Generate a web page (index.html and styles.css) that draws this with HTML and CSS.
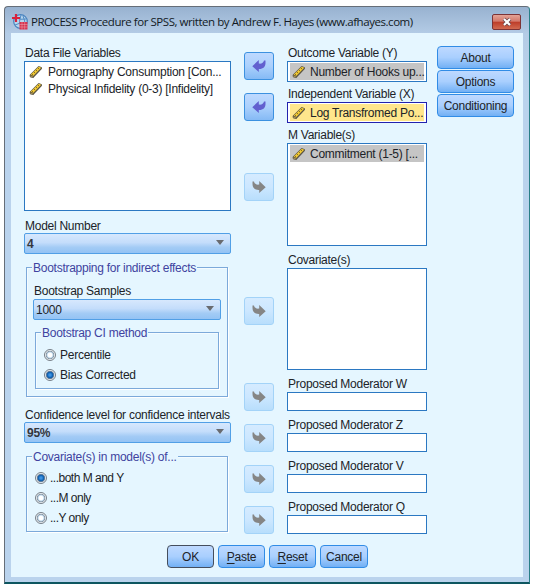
FILE: index.html
```
<!DOCTYPE html>
<html lang="en">
<head>
<meta charset="utf-8">
<title>PROCESS Procedure for SPSS</title>
<link rel="stylesheet" href="styles.css">
</head>
<body>
<svg class="defs" width="0" height="0">
  <symbol id="ruler" viewBox="0 0 14 14">
    <path d="M.8 9.800 9.600 1 12.800 2.200 13 3.800 4.500 12.800 1.200 12Z" fill="#5b5545"/>
    <path d="M1.600 9.800 9.800 1.700 12.200 2.700 4.200 11Z" fill="#f4cb32"/>
    <path d="M3 9.300l1 .5M5 7.300l1 .5M7 5.300l1 .5M9 3.300l1 .5" stroke="#66541c" stroke-width=".8"/>
    <path d="M1 10 4.300 11.300V12.600L1.200 12Z" fill="#b9a05a" stroke="#4a463c" stroke-width=".5"/>
  </symbol>
  <symbol id="back" viewBox="0 0 14 12">
    <path d="M.3 6.200 6.800 0V3.600C9.500 4 11.500 3 12 .6H13.500V3C13.500 7 11 9.200 6.800 9V12Z" fill="#6260cf"/>
  </symbol>
  <symbol id="forward" viewBox="0 0 14 12">
    <path d="M13.700 6.200 7.200 0V3.600C4.500 4 2.500 3 2 .6H.5V3C.5 7 3 9.200 7.200 9V12Z" fill="#858585"/>
  </symbol>
</svg>
<main class="window">
  <header class="titlebar">
    <svg class="logo" viewBox="0 0 16 16">
      <circle cx="8.500" cy="7.500" r="6.800" fill="#b8d5ec" stroke="#4a84bf" stroke-width="1.200"/>
      <path d="M3 11Q8 8 14 9M4 4Q9 6 14 5M9 1Q6 7 9 14M11 2Q14 7 12 12" fill="none" stroke="#4f8ac5" stroke-width="1"/>
      <path d="M4 0V8M0 4H8" stroke="#d9213c" stroke-width="2.200"/>
      <path d="M7.500 8H15.500V15.500H7.500Z" fill="#d53350"/>
      <path d="M7.500 10.500H15.500M7.500 13H15.500M10 8V15.500M12.700 8V15.500" stroke="#f5c4ca" stroke-width=".4"/>
    </svg>
    <span class="title">PROCESS Procedure for SPSS, written by Andrew F. Hayes (www.afhayes.com)</span>
    <span class="close"><svg viewBox="0 0 12 10"><path d="M3 2 9 8M9 2 3 8" stroke="#69444a" stroke-width="3.800"/><path d="M3 2 9 8M9 2 3 8" stroke="#fff" stroke-width="2.200"/></svg></span>
  </header>
  <div class="client">
    <div class="columns">
      <section class="left">
        <label class="label">Data File Variables</label>
        <div class="list source">
          <div class="item"><svg><use href="#ruler"/></svg><span>Pornography Consumption [Con...</span></div>
          <div class="item"><svg><use href="#ruler"/></svg><span>Physical Infidelity (0-3) [Infidelity]</span></div>
        </div>
        <label class="label model-label">Model Number</label>
        <div class="combo bold"><span>4</span><i></i></div>
        <div class="group bootstrap">
          <span class="legend">Bootstrapping for indirect effects</span>
          <label class="label">Bootstrap Samples</label>
          <div class="combo"><span>1000</span><i></i></div>
          <div class="group method">
            <span class="legend">Bootstrap CI method</span>
            <div class="radio"><b></b><span>Percentile</span></div>
            <div class="radio on"><b></b><span>Bias Corrected</span></div>
          </div>
        </div>
        <label class="label conf-label">Confidence level for confidence intervals</label>
        <div class="combo bold"><span>95%</span><i></i></div>
        <div class="group covariates">
          <span class="legend">Covariate(s) in model(s) of...</span>
          <div class="radio on"><b></b><span>...both M and Y</span></div>
          <div class="radio"><b></b><span>...M only</span></div>
          <div class="radio"><b></b><span>...Y only</span></div>
        </div>
      </section>
      <section class="right">
        <div class="row">
          <span class="move active"><svg><use href="#back"/></svg></span>
          <div class="field"><label class="label">Outcome Variable (Y)</label><div class="list"><div class="item picked"><svg><use href="#ruler"/></svg><span>Number of Hooks up...</span></div></div></div>
        </div>
        <div class="row">
          <span class="move active"><svg><use href="#back"/></svg></span>
          <div class="field"><label class="label">Independent Variable (X)</label><div class="list focused"><div class="item current"><svg><use href="#ruler"/></svg><span>Log Transfromed Po...</span></div></div></div>
        </div>
        <div class="row tall m">
          <span class="move"><svg><use href="#forward"/></svg></span>
          <div class="field"><label class="label">M Variable(s)</label><div class="list"><div class="item picked"><svg><use href="#ruler"/></svg><span>Commitment (1-5) [...</span></div></div></div>
        </div>
        <div class="row tall">
          <span class="move"><svg><use href="#forward"/></svg></span>
          <div class="field"><label class="label">Covariate(s)</label><div class="list"></div></div>
        </div>
        <div class="row">
          <span class="move"><svg><use href="#forward"/></svg></span>
          <div class="field"><label class="label">Proposed Moderator W</label><div class="list"></div></div>
        </div>
        <div class="row">
          <span class="move"><svg><use href="#forward"/></svg></span>
          <div class="field"><label class="label">Proposed Moderator Z</label><div class="list"></div></div>
        </div>
        <div class="row">
          <span class="move"><svg><use href="#forward"/></svg></span>
          <div class="field"><label class="label">Proposed Moderator V</label><div class="list"></div></div>
        </div>
        <div class="row">
          <span class="move"><svg><use href="#forward"/></svg></span>
          <div class="field"><label class="label">Proposed Moderator Q</label><div class="list"></div></div>
        </div>
      </section>
      <nav class="side">
        <span class="button">About</span>
        <span class="button">Options</span>
        <span class="button">Conditioning</span>
      </nav>
    </div>
    <footer class="actions">
      <span class="button default">OK</span>
      <span class="button"><span><u>P</u>aste</span></span>
      <span class="button"><span><u>R</u>eset</span></span>
      <span class="button">Cancel</span>
    </footer>
  </div>
</main>
</body>
</html>
```
FILE: styles.css
```
* { box-sizing: border-box; }
body {
  margin: 0;
  padding: 6px 0 0 4px;
  background: #fff;
  font: 12px/16px "Liberation Sans", sans-serif;
  letter-spacing: -.26px;
  color: #202328;
}
.defs { display: block; height: 0; }
svg { display: block; flex: none; }
.window {
  width: 526px;
  height: 578px;
  padding: 0 6px 6px;
  border: 1px solid #666e78;
  border-right-color: #287f87;
  border-bottom: 2px solid #0d5660;
  border-radius: 4px 4px 0 0;
  background: linear-gradient(#98b2d0, #b4cce6 27px, #bad3ed 90px);
}
.titlebar {
  display: flex;
  align-items: center;
  height: 26px;
  padding: 4px 2px 0;
  font: 11.5px/20px "Open Sans", sans-serif;
  color: #121a24;
}
.logo { width: 16px; height: 16px; margin: -1px 0 0 -1px; }
.title { margin: 0 0 0 3px; white-space: nowrap; letter-spacing: -.45px; }
.close {
  display: flex;
  align-items: center;
  justify-content: center;
  width: 29px;
  height: 16px;
  margin: -1px 0 0 auto;
  border: 1px solid #7c3336;
  border-radius: 2px;
  background: linear-gradient(#e3a396, #d4786a 45%, #bd3c29 50%, #d16a50);
}
.close svg { width: 12px; height: 10px; }
.client { height: 544px; padding: 12px 9px 0 13px; background: #e5f6ff; }
.columns { display: flex; height: 500px; }
.left { width: 207px; }
.label { display: block; height: 16px; padding-left: 1px; white-space: nowrap; }
.list { border: 1px solid #2b78c2; background: #fff; }
.source { height: 150px; padding: 1px 4px; }
.item { display: flex; align-items: center; height: 17px; white-space: nowrap; }
.item svg { width: 14px; height: 14px; margin-right: 5px; }
.model-label { margin-top: 7px; height: 15px; }
.combo {
  display: flex;
  align-items: center;
  justify-content: space-between;
  height: 21px;
  padding: 0 6px 0 2px;
  border: 1px solid #519fe6;
  border-radius: 2px;
  background: linear-gradient(#d7e8fd, #c4ddfb 45%, #a3cbf5 70%, #94c3f4);
}
.bold { font-weight: 700; color: #33373d; }
.combo i { width: 0; margin-top: -2px; border: 4px solid transparent; border-top: 5px solid #696b70; border-bottom: 0; }
.group { position: relative; border: 1px solid #7ca9da; box-shadow: 1px 1px #fff, inset 1px 1px #f4fbff; }
.legend {
  position: absolute;
  top: -8px;
  left: 5px;
  padding: 0 1px;
  background: #e5f6ff;
  color: #4043a0;
  white-space: nowrap;
}
.bootstrap { width: 202px; height: 130px; margin: 13px 0 0 2px; padding: 15px 6px 0; }
.bootstrap > .label { padding-left: 1px; }
.bootstrap .combo { width: 188px; }
.method { width: 184px; height: 57px; margin: 12px 0 0 2px; padding: 12px 0 0 8px; }
.radio { display: flex; align-items: center; height: 20px; gap: 4px; white-space: nowrap; }
.radio b {
  width: 12px;
  height: 12px;
  border: 1px solid #777f88;
  border-radius: 50%;
  background: radial-gradient(#fff 0 2px, #b7d2e8 3px, #8997a4 3.800px, #edf3f7 4.600px);
}
.radio.on b { background: radial-gradient(#3c92e2 0 1px, #0b5dae 2.800px, #71859c 3.800px, #edf3f7 4.600px); }
.conf-label { margin-top: 10px; height: 15px; }
.covariates { width: 202px; height: 76px; margin: 13px 0 0 2px; padding: 11px 0 0 8px; }
.covariates .radio { gap: 3px; }
.covariates .radio span { letter-spacing: -.5px; }
.right { display: flex; flex-direction: column; gap: 6px; margin-left: 13px; }
.row { display: flex; align-items: flex-end; gap: 13px; height: 35px; }
.tall { height: 118px; align-items: center; }
.m { height: 119px; }
.move {
  display: flex;
  align-items: center;
  justify-content: center;
  width: 30px;
  height: 28px;
  border: 1px solid #a3d3f8;
  border-radius: 3px;
  background: linear-gradient(#d5ebff, #cce7ff 50%, #b8defc);
}
.move.active { border-color: #3c91e0; background: linear-gradient(#bed9ff, #abd0fc 50%, #85baf5); }
.move svg { width: 14px; height: 12px; }
.field { display: flex; flex-direction: column; width: 140px; height: 100%; }
.field .list { flex: 1; padding: 1px 2px; }
.field .item { padding-left: 2px; }
.field .item svg { margin-right: 4px; }
.focused { border-color: #2222ae; }
.picked { background: #c5c5c5; }
.current { background: #ffe68c; }
.side { display: flex; flex-direction: column; gap: 1px; width: 77px; margin: 1px 0 0 10px; }
.button {
  display: flex;
  align-items: center;
  justify-content: center;
  height: 23px;
  border: 1px solid #318ce6;
  border-radius: 4px;
  background: linear-gradient(#bed9ff, #a9cffe 50%, #72b0f4);
  white-space: nowrap;
}
.actions { display: flex; gap: 4px; margin-left: 143px; }
.actions .button { width: 47px; }
.actions .button:last-child { width: 48px; }
.actions .default { border-color: #454e5d; }
u { text-underline-offset: 2px; }
```
